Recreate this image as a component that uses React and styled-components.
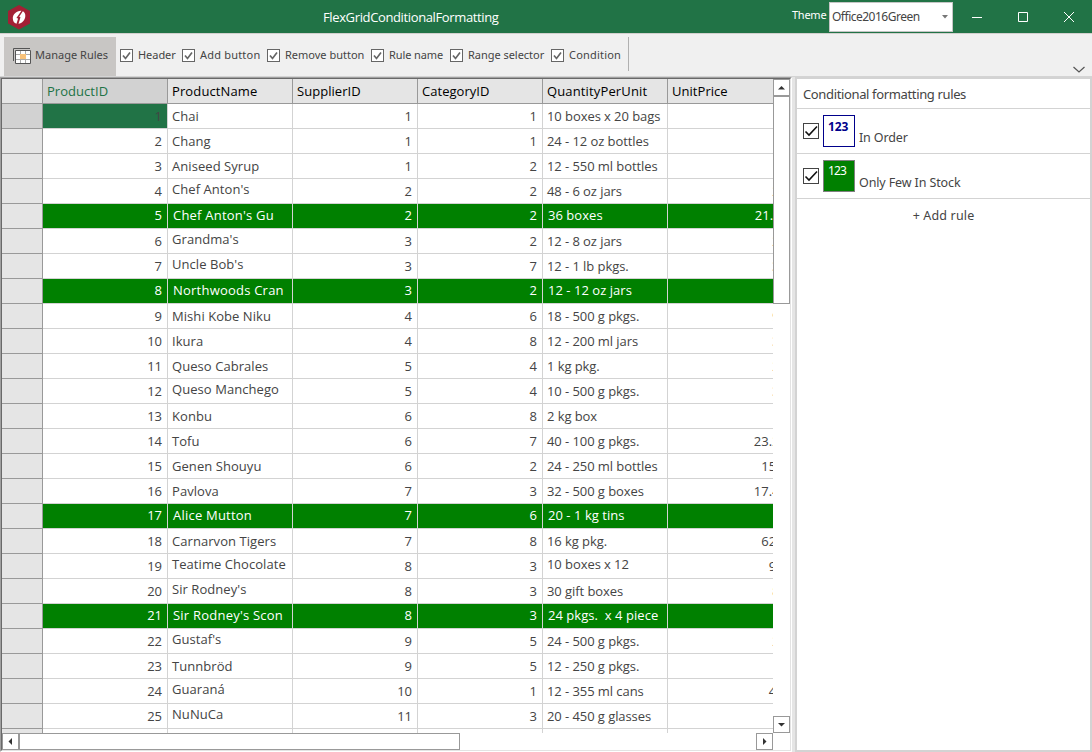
import React from "react";
import styled, { createGlobalStyle, css } from "styled-components";

const Global = createGlobalStyle`
  * { box-sizing: border-box; }
  body { margin: 0; overflow: hidden; }
`;

const Window = styled.div`
  width: 1092px;
  height: 752px;
  display: flex;
  flex-direction: column;
  overflow: hidden;
  background: #f0f0f0;
  color: #444;
  font: 12px/16px "Noto Sans", "Segoe UI", sans-serif;
  white-space: pre;
`;

const TitleBar = styled.header`
  display: flex;
  height: 33px;
  flex: none;
  background: #217346;
  color: #fff;
`;
const Logo = styled.svg`
  margin: 5px 0 0 7px;
  width: 24px;
  height: 25px;
`;
const Title = styled.h1`
  margin: 9px 0 0 292px;
  width: 469px;
  font: 13px/16px "Open Sans", sans-serif;
  letter-spacing: -0.37px;
`;
const ThemeLabel = styled.span`
  padding-top: 7px;
  width: 37px;
  font-size: 11px;
  letter-spacing: -0.25px;
`;
const Select = styled.div`
  display: flex;
  align-items: center;
  justify-content: space-between;
  margin-top: 2px;
  width: 124px;
  height: 30px;
  padding: 0 4px 0 2px;
  border: 1px solid #c6c6c6;
  background: #fff;
  color: #444;
  letter-spacing: -0.5px;
  font-size: 12px;
`;
const Caption = styled.svg`
  width: 46px;
  height: 33px;
  margin-left: ${(p) => p.$left || 0}px;
`;

const Ribbon = styled.nav`
  display: flex;
  height: 44px;
  flex: none;
  border-top: 1px solid #d2d0ce;
  border-bottom: 1px solid #d4d4d4;
  padding: 3px 0 0 4px;
  font-size: 11px;
`;
const ManageButton = styled.button`
  display: flex;
  align-items: center;
  width: 112px;
  height: 39px;
  padding: 0 0 2px 8px;
  border: 0;
  background: #c8c6c4;
  color: #444;
  font: inherit;
  gap: 3px;
`;
const ButtonText = styled.span`
  padding-bottom: 2px;
  letter-spacing: 0.02px;
`;
const Option = styled.label`
  display: flex;
  align-items: center;
  height: 37px;
  width: ${(p) => p.$w}px;
  padding-left: 4px;
  gap: 5px;
`;
const OptionText = styled.span`
  padding-bottom: 1px;
  letter-spacing: ${(p) => p.$ls}px;
`;
const Separator = styled.div`
  width: 1px;
  height: 34px;
  margin: 0 0 0 3px;
  background: #b0b0b0;
`;
const Collapse = styled.svg`
  margin: 27px 6px 0 auto;
  width: 14px;
  height: 10px;
`;

const Body = styled.main`
  display: flex;
  flex: 1;
  min-height: 0;
`;
const GridFrame = styled.section`
  width: 792px;
  flex: none;
  border: 1px solid;
  border-color: #a0a0a0 #fff #fff #a0a0a0;
`;
const GridPane = styled.div`
  display: grid;
  grid-template-columns: 771px 17px;
  grid-template-rows: 654px 17px;
  border: 1px solid;
  border-color: #696969 #e3e3e3 #e3e3e3 #696969;
  background: #fff;
`;
const Grid = styled.div`
  overflow: hidden;
`;
const Row = styled.div`
  display: grid;
  grid-template-columns: 41px repeat(6, 125px);
  height: 25px;
  font: 13px/18px "Open Sans", sans-serif;
`;
const HeadCell = styled.div`
  height: 25px;
  padding: 3px 4px;
  border-right: 1px solid #999;
  border-bottom: 1px solid #999;
  background: ${(p) => (p.$active ? "#d2d2d2" : "#e5e5e5")};
  color: ${(p) => (p.$active ? "#217346" : "#000")};
  letter-spacing: ${(p) => p.$ls || 0.04}px;
`;
const Cell = styled.div`
  height: 25px;
  overflow: hidden;
  padding: ${(p) => (p.$raised ? 1 : 3)}px 5px 0 4px;
  border-right: 1px solid #d3d3d3;
  border-bottom: 1px solid #d3d3d3;
  text-align: ${(p) => (p.$num ? "right" : "left")};
  letter-spacing: ${(p) => (p.$range ? -0.07 : p.$num ? 0 : 0.06)}px;
  ${(p) => p.$hit && css`
    background: #008000;
    color: #fff;
    padding: 2px ${p.$price ? 4 : 5}px 0 5px;
    letter-spacing: ${p.$num ? 0 : p.$range ? 0.04 : 0.22}px;
  `}
  ${(p) => p.$selected && css`background: #217346;`}
`;

const VBar = styled.div`
  display: flex;
  flex-direction: column;
  justify-content: space-between;
  width: 17px;
`;
const HBar = styled.div`
  display: flex;
  justify-content: space-between;
  height: 17px;
`;
const BarButton = styled.svg`
  display: block;
  width: 17px;
  height: 17px;
  flex: none;
  border: 1px solid #999;
`;
const VThumb = styled.div`
  width: 17px;
  height: 208px;
  margin-bottom: auto;
  border: 1px solid #999;
`;
const HThumb = styled.div`
  width: 441px;
  height: 17px;
  margin-right: auto;
  border: 1px solid #999;
`;
const Splitter = styled.div`
  width: 5px;
  border-right: 2px solid #d3d3d3;
  background: #e5e5e5;
`;
const RulesPane = styled.aside`
  flex: 1;
  border: solid #d3d3d3;
  border-width: 2px 2px 2px 0;
  background: #fff;
  font-size: 13px;
`;
const RulesTitle = styled.h2`
  margin: 0;
  height: 30px;
  padding: 7px 6px;
  border-bottom: 1px solid #d3d3d3;
  font: 13px/16px "Noto Sans", sans-serif;
  letter-spacing: -0.36px;
`;
const Rule = styled.div`
  display: flex;
  align-items: center;
  height: 45px;
  padding-left: 6px;
  gap: 4px;
  border-bottom: 1px solid #d3d3d3;
`;
const RuleName = styled.span`
  padding-top: 14px;
  font-size: 12.5px;
  letter-spacing: -0.12px;
`;
const Sample = styled.div`
  width: 32px;
  height: 32px;
  padding: ${(p) => (p.$solid ? 2 : 3)}px 4px;
  border: 1px solid ${(p) => (p.$solid ? "#808080" : "#00008b")};
  background: ${(p) => (p.$solid ? "#008000" : "#fff")};
  color: ${(p) => (p.$solid ? "#fff" : "#00008b")};
  font: ${(p) => (p.$solid ? 400 : 700)} 12px/16px "Noto Sans", sans-serif;
  letter-spacing: ${(p) => (p.$solid ? -0.9 : -0.1)}px;
`;
const AddRule = styled.button`
  display: block;
  width: 100%;
  height: 34px;
  border: 0;
  background: none;
  color: #444;
  font: 12.5px/16px "Noto Sans", sans-serif;
  letter-spacing: 0.15px;
`;

const Check = ({ size = 13, dark }) => (
  <svg width={size} height={size} viewBox={`0 0 ${size} ${size}`}>
    <rect x=".5" y=".5" width={size - 1} height={size - 1} fill="#fff" stroke={dark ? "#444" : "#666"} />
    <path d={dark ? "M2.5 8.5l3.5 3.5 8-8.5" : "M3 6.5l2.5 3L10 3.5"} fill="none" stroke={dark ? "#111" : "#666"} strokeWidth={dark ? 1.6 : 1.7} />
  </svg>
);

const ARROWS = { up: "M4 9.5h7L7.5 6z", down: "M4 6h7L7.5 9.5z", left: "M9 4v7L5.5 7.5z", right: "M6 4v7l3.5-3.5z" };
const Arrow = ({ dir }) => <BarButton viewBox="0 0 15 15"><path d={ARROWS[dir]} fill="#333" /></BarButton>;

const OPTIONS = [["Header", 62, -0.05], ["Add button", 85, 0.2], ["Remove button", 104, 0], ["Rule name", 79, -0.1], ["Range selector", 101, -0.03], ["Condition", 78, 0.2]];

const HEADS = ["ProductID", "ProductName", "SupplierID", "CategoryID", "QuantityPerUnit", "UnitPrice"];

const ROWS = [
  [1, "Chai", 1, 1, "10 boxes x 20 bags", "18"],
  [2, "Chang", 1, 1, "24 - 12 oz bottles", "19"],
  [3, "Aniseed Syrup", 1, 2, "12 - 550 ml bottles", "10"],
  [4, "Chef Anton's", 2, 2, "48 - 6 oz jars", "22"],
  [5, "Chef Anton's Gu", 2, 2, "36 boxes", "21.35"],
  [6, "Grandma's", 3, 2, "12 - 8 oz jars", "25"],
  [7, "Uncle Bob's", 3, 7, "12 - 1 lb pkgs.", "30"],
  [8, "Northwoods Cran", 3, 2, "12 - 12 oz jars", "40"],
  [9, "Mishi Kobe Niku", 4, 6, "18 - 500 g pkgs.", "97"],
  [10, "Ikura", 4, 8, "12 - 200 ml jars", "31"],
  [11, "Queso Cabrales", 5, 4, "1 kg pkg.", "21"],
  [12, "Queso Manchego", 5, 4, "10 - 500 g pkgs.", "38"],
  [13, "Konbu", 6, 8, "2 kg box", "6"],
  [14, "Tofu", 6, 7, "40 - 100 g pkgs.", "23.25"],
  [15, "Genen Shouyu", 6, 2, "24 - 250 ml bottles", "15.5"],
  [16, "Pavlova", 7, 3, "32 - 500 g boxes", "17.45"],
  [17, "Alice Mutton", 7, 6, "20 - 1 kg tins", "39"],
  [18, "Carnarvon Tigers", 7, 8, "16 kg pkg.", "62.5"],
  [19, "Teatime Chocolate", 8, 3, "10 boxes x 12", "9.2"],
  [20, "Sir Rodney's", 8, 3, "30 gift boxes", "81"],
  [21, "Sir Rodney's Scon", 8, 3, "24 pkgs.  x 4 piece", "10"],
  [22, "Gustaf's", 9, 5, "24 - 500 g pkgs.", "21"],
  [23, "Tunnbröd", 9, 5, "12 - 250 g pkgs.", "9"],
  [24, "Guaraná", 10, 1, "12 - 355 ml cans", "4.5"],
  [25, "NuNuCa", 11, 3, "20 - 450 g glasses", "14"],
  ["", "", "", "", "", ""],
];
const HITS = new Set([5, 8, 17, 21]);
const RAISED = new Set(["Chef Anton's", "Grandma's", "Uncle Bob's", "Queso Manchego", "Teatime Chocolate", "10 boxes x 12", "Sir Rodney's", "Gustaf's", "Guaraná", "NuNuCa"]);

export default function App() {
  return (
    <Window>
      <Global />
      <TitleBar>
        <Logo viewBox="0 0 24 25">
          <path d="M12 0l11 6v12.500L12 24.500 1 18.500V6z" fill="#a32035" />
          <path d="M14.500 5.800C9.500 5.500 5.800 9.500 5.800 13.300c0 3 1.500 4.900 3.700 5.400l1.600-5.200-1.700-.4z" fill="#fff" />
          <path d="M15.800 6.200c1.800.9 2.700 2.700 2.500 5-.3 3.800-3.200 7-6.800 7.600l2-6.500-1.300-.5z" fill="#fff" />
        </Logo>
        <Title>FlexGridConditionalFormatting</Title>
        <ThemeLabel>Theme</ThemeLabel>
        <Select>
          Office2016Green
          <svg width="6" height="4"><path d="M0 0h6L3 3.500z" fill="#777" /></svg>
        </Select>
        <Caption $left={1}><path d="M18 17.500h10" stroke="#fff" /></Caption>
        <Caption><path d="M18.500 12.500h9v9h-9z" fill="none" stroke="#fff" /></Caption>
        <Caption><path d="M18 12l10 10M28 12l-10 10" stroke="#fff" /></Caption>
      </TitleBar>
      <Ribbon>
        <ManageButton>
          <svg width="20" height="18" viewBox="0 0 20 18">
            <path d="M1.500 14V1.500H18" fill="none" stroke="#555" />
            <path d="M3.500 3.500h15v13h-15z" fill="#fff" stroke="#555" />
            <path d="M8.500 4v12M13.500 4v12M4 7.500h14M4 12.500h14" stroke="#aaa" />
            <path d="M8 7h6v5H8z" fill="#f8c27a" />
          </svg>
          <ButtonText>Manage Rules</ButtonText>
        </ManageButton>
        {OPTIONS.map(([name, w, ls]) => <Option key={name} $w={w}><Check /><OptionText $ls={ls}>{name}</OptionText></Option>)}
        <Separator />
        <Collapse><path d="M1.500 3l5.500 5 5.500-5" fill="none" stroke="#555" strokeWidth="1.200" /></Collapse>
      </Ribbon>
      <Body>
        <GridFrame>
          <GridPane>
            <Grid>
              <Row>
                <HeadCell />
                {HEADS.map((h, i) => <HeadCell key={h} $active={i === 0} $ls={i === 4 ? 0.14 : i === 1 ? 0.12 : 0.04}>{h}</HeadCell>)}
              </Row>
              {ROWS.map((r, y) => (
                <Row key={y}>
                  <HeadCell $active={y === 0} />
                  {r.map((v, i) => (
                    <Cell key={i} $num={i !== 1 && i !== 4} $range={i === 4} $price={i === 5} $hit={HITS.has(r[0])} $raised={RAISED.has(v)} $selected={y === 0 && i === 0}>{v}</Cell>
                  ))}
                </Row>
              ))}
            </Grid>
            <VBar><Arrow dir="up" /><VThumb /><Arrow dir="down" /></VBar>
            <HBar><Arrow dir="left" /><HThumb /><Arrow dir="right" /></HBar>
          </GridPane>
        </GridFrame>
        <Splitter />
        <RulesPane>
          <RulesTitle>Conditional formatting rules</RulesTitle>
          <Rule><Check size={16} dark /><Sample>123</Sample><RuleName>In Order</RuleName></Rule>
          <Rule><Check size={16} dark /><Sample $solid>123</Sample><RuleName>Only Few In Stock</RuleName></Rule>
          <AddRule>+ Add rule</AddRule>
        </RulesPane>
      </Body>
    </Window>
  );
}
